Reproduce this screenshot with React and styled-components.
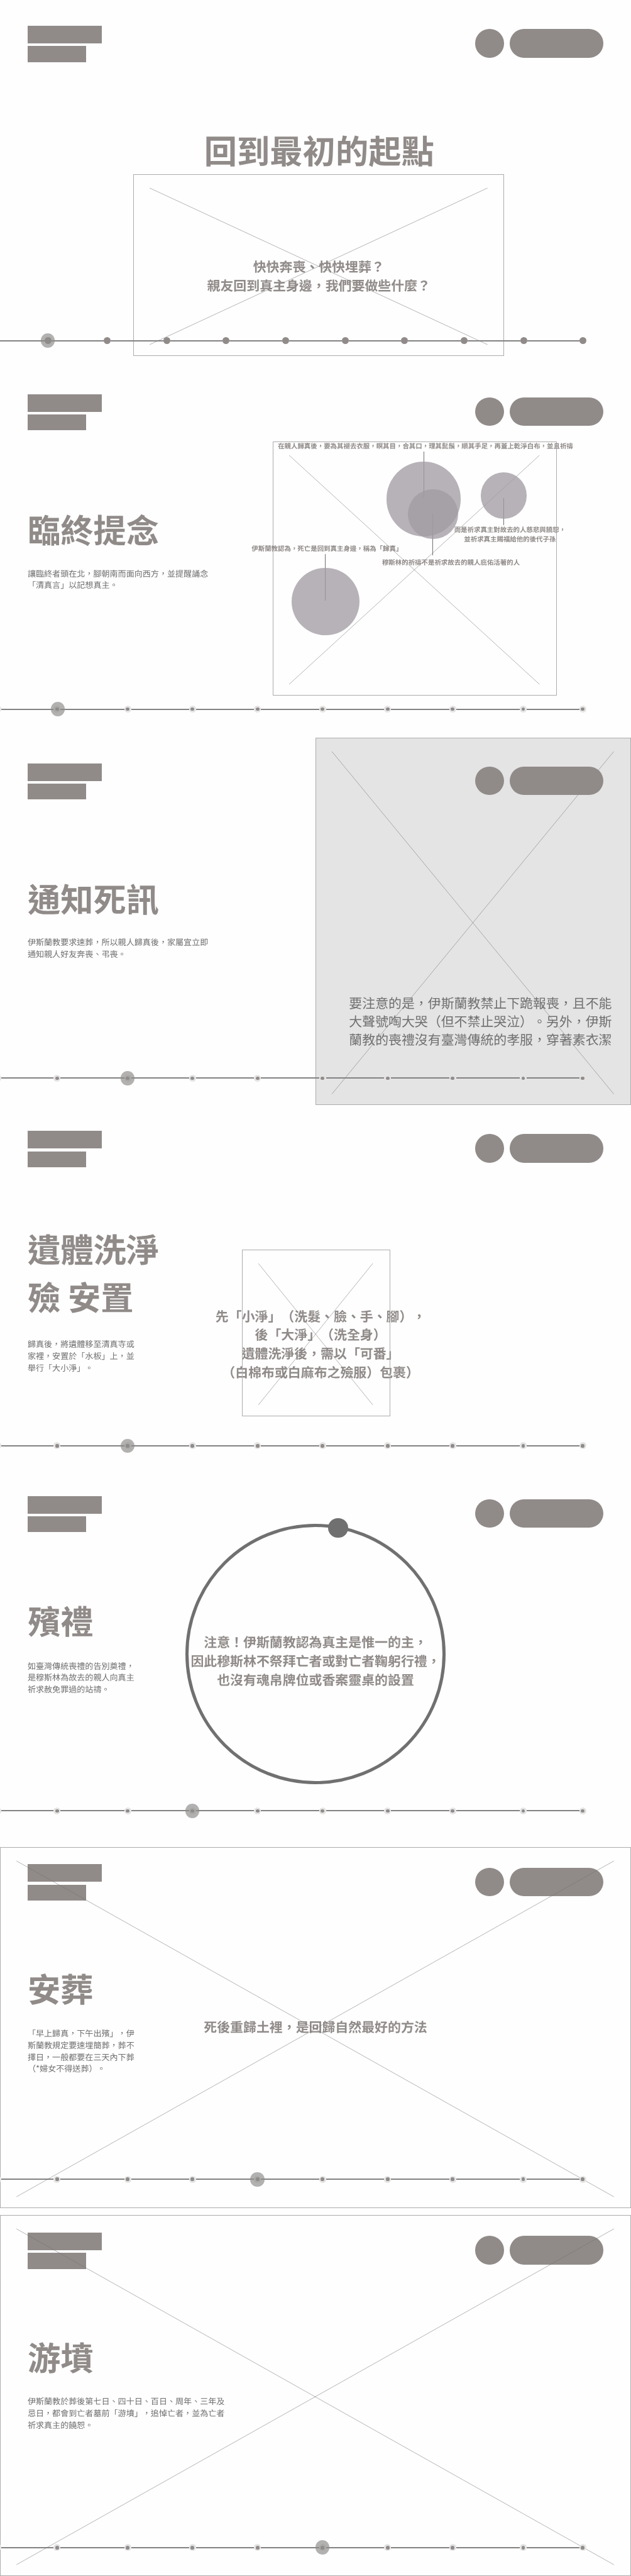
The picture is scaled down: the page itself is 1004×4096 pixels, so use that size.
import React from "react";
import styled, { createGlobalStyle } from "styled-components";

// Design units are those of a 1920 x 7830 artboard.
const SCALE = 1004 / 1920;
const SCALE_Y = 4096 / 7830;
const u = (n) => `${+(n * SCALE).toFixed(3)}px`;
const v = (n) => `${+(n * SCALE_Y).toFixed(3)}px`;

const GREY = "#908b89";
const INK = "#707070";
const HAIR = "#acacac";
const PALE = "#e4e4e4";

const DROP = 3.4;

const GlobalStyle = createGlobalStyle`
  *, *::before, *::after { box-sizing: border-box; }
  body {
    margin: 0;
    background: #fefefe;
    font-family: "Noto Sans CJK TC", "Noto Sans", sans-serif;
    text-rendering: geometricPrecision;
    text-spacing-trim: space-all;
  }
`;

const Page = styled.main`
  width: ${u(1920)};
  height: ${v(7830)};
  overflow: hidden;
  display: flex;
  flex-direction: column;
  will-change: transform;
`;

const Slide = styled.section`
  flex: 0 0 ${(p) => v(p.$height)};
  height: ${(p) => v(p.$height)};
  display: grid;
  grid-template: ${(p) => v(p.$height)} / ${u(1920)};
  align-items: start;
  justify-items: start;
  > * { grid-area: 1 / 1; }
`;

const Header = styled.header`
  width: 100%;
  display: flex;
  justify-content: space-between;
  padding: ${v(78)} ${u(84.5)} 0;
`;

const Brand = styled.div`
  display: flex;
  flex-direction: column;
  gap: ${u(9)};
`;

const BrandBar = styled.span`
  width: ${(p) => u(p.$w)};
  height: ${(p) => u(p.$h)};
  background: ${GREY};
`;

const Actions = styled.div`
  display: flex;
  gap: ${u(18.5)};
  padding-top: ${u(10)};
`;

const Pill = styled.span`
  width: ${(p) => u(p.$w)};
  height: ${u(87)};
  border-radius: ${u(43.5)};
  background: ${GREY};
`;

const Copy = styled.div`
  display: flex;
  flex-direction: column;
  gap: ${(p) => v(p.$gap)};
  padding: ${(p) => v(p.$top + DROP)} 0 0 ${u(84)};
`;

const Title = styled.h2`
  margin: 0;
  color: ${GREY};
  font-size: ${u(100)};
  font-weight: 700;
  line-height: ${u(144)};
  white-space: pre;
`;

const Body = styled.p`
  margin: 0;
  color: ${INK};
  font-size: ${u(25)};
  line-height: ${u(36)};
  white-space: pre;
`;

const Hero = styled.div`
  width: ${u(1942)};
  display: flex;
  flex-direction: column;
  align-items: center;
  padding-top: ${v(381 + DROP)};
`;

const Statement = styled.p`
  margin: ${(p) => v(p.$top + DROP)} 0 0;
  width: ${(p) => u(p.$center * 2)};
  color: ${GREY};
  font-size: ${u(40)};
  font-weight: 700;
  line-height: ${u(57.2)};
  text-align: center;
  white-space: pre;
`;

const Note = styled.p`
  margin: ${v(776.7 + DROP)} 0 0 ${u(1062)};
  color: ${INK};
  font-size: ${u(40)};
  line-height: ${u(55.7)};
  white-space: pre;
`;

const FrameBox = styled.div`
  margin: ${(p) => v(p.$y)} 0 0 ${(p) => u(p.$x)};
  width: ${(p) => u(p.$w)};
  height: ${(p) => v(p.$h)};
  border: 1px solid ${HAIR};
  background: ${(p) => p.$fill || "transparent"};
  svg { display: block; margin: -1px; overflow: visible; }
`;

const Track = styled.div`
  display: flex;
  align-items: center;
  height: ${u(44)};
  margin-top: ${v(1013.5)};
`;

const Segment = styled.span`
  flex: 0 0 ${(p) => u(p.$w)};
  height: 2px;
  background: #828282;
`;

const Stop = styled.span`
  position: relative;
  flex: 0 0 ${u(21)};
  height: ${u(21)};
  border-radius: 50%;
  background: ${(p) => (p.$solid ? GREY : PALE)};
  display: grid;
  place-items: center;
  &::before {
    content: "";
    width: ${u(11)};
    height: ${u(11)};
    border-radius: 50%;
    background: ${GREY};
  }
`;

const Halo = styled.span`
  position: absolute;
  top: ${u(-11)};
  left: ${(p) => u(-11 + p.$shift)};
  width: ${u(43)};
  height: ${u(43)};
  border-radius: 50%;
  background: rgba(142, 140, 138, 0.68);
`;

const Ring = styled.div`
  position: relative;
  margin: ${v(163)} 0 0 ${u(564.5)};
  width: ${u(791)};
  height: ${u(791)};
  border: ${u(10)} solid ${INK};
  border-radius: 50%;
`;

const Knob = styled.span`
  position: absolute;
  left: ${u(424.5)};
  top: ${u(-27)};
  width: ${u(60)};
  height: ${u(60)};
  border-radius: 50%;
  background: ${INK};
`;

const Canvas = styled.div`
  position: relative;
  width: 100%;
  height: 100%;
`;

const Lead = styled.span`
  position: absolute;
  left: ${(p) => u(p.$x - 1)};
  top: ${(p) => u(p.$y)};
  width: 1px;
  height: ${(p) => u(p.$h)};
  background: ${INK};
`;

const Bubble = styled.span`
  position: absolute;
  left: ${(p) => u(p.$x - p.$r)};
  top: ${(p) => u(p.$y - p.$r)};
  width: ${(p) => u(p.$r * 2)};
  height: ${(p) => u(p.$r * 2)};
  border-radius: 50%;
  background: rgba(160, 154, 162, 0.76);
`;

const Label = styled.span`
  position: absolute;
  left: ${(p) => u(p.$x)};
  top: ${(p) => u(p.$y - 15.6 + DROP / 2)};
  color: ${GREY};
  font-size: ${u(20)};
  font-weight: 700;
  line-height: ${u(29)};
  text-align: center;
  white-space: pre;
`;

function Frame({ x, y, w, h, fill }) {
  const padX = 50;
  const padTop = 42;
  const padBottom = 34;
  return (
    <FrameBox $x={x} $y={y} $w={w} $h={h} $fill={fill}>
      <svg width={w * SCALE} height={h * SCALE_Y} viewBox={`0 0 ${w} ${h}`} preserveAspectRatio="none" fill="none" stroke={INK}>
        <path d={`M${padX} ${padTop}L${w - padX - 2} ${h - padBottom}M${w - padX - 2} ${padTop}L${padX} ${h - padBottom}`} />
      </svg>
    </FrameBox>
  );
}

function Masthead() {
  return (
    <Header>
      <Brand>
        <BrandBar $w={224.5} $h={53.5} />
        <BrandBar $w={178} $h={48} />
      </Brand>
      <Actions>
        <Pill $w={87} />
        <Pill $w={284} />
      </Actions>
    </Header>
  );
}

const HERO_STOPS = [145.5, 326.5, 507.5, 688.5, 869.5, 1050.5, 1231.5, 1412.5, 1593.5, 1774.5];
const STOPS = [-7, 173.5, 388.5, 585.5, 783.5, 981.5, 1179.5, 1377.5, 1592.5, 1773.5];

function Timeline({ stops = STOPS, active, solid }) {
  let x = 0;
  return (
    <Track>
      {stops.map((stop, i) => {
        const width = stop - 10.5 - x;
        x = stop + 10.5;
        return (
          <React.Fragment key={stop}>
            {width > 0 && <Segment $w={width} />}
            <Stop $solid={solid} style={width < 0 ? { marginLeft: width * SCALE } : undefined}>
              {i === active && <Halo $shift={active === 1 ? 2 : 0} />}
            </Stop>
          </React.Fragment>
        );
      })}
    </Track>
  );
}

export default function App() {
  return (
    <Page>
      <GlobalStyle />

      <Slide $height={1120}>
        <Masthead />
        <Hero>
          <Title as="h1">回到最初的起點</Title>
        </Hero>
        <Statement $top={781} $center={970}>{"快快奔喪、快快埋葬？\n親友回到真主身邊，我們要做些什麼？"}</Statement>
        <Frame x={404.5} y={529.5} w={1130} h={552} />
        <Timeline stops={HERO_STOPS} active={0} solid />
      </Slide>

      <Slide $height={1122}>
        <Masthead />
        <Copy $top={413} $gap={45}>
          <Title>臨終提念</Title>
          <Body>{"讓臨終者頭在北，腳朝南而面向西方，並提醒誦念\n「清真言」以記想真主。"}</Body>
        </Copy>
        <Frame x={830} y={222} w={863.5} h={772} />
        <Canvas>
          <Lead $x={1289.5} $y={253} $h={141} />
          <Lead $x={1317.5} $y={441} $h={128} />
          <Lead $x={1533.5} $y={394} $h={83} />
          <Lead $x={990.5} $y={563.5} $h={143} />
          <Bubble $x={1289.5} $y={397} $r={113} />
          <Bubble $x={1317.5} $y={443} $r={76} />
          <Bubble $x={1533.5} $y={386.5} $r={70} />
          <Bubble $x={990} $y={709} $r={103} />
          <Label $x={845.5} $y={236.7}>在親人歸真後，要為其褪去衣服，瞑其目，合其口，理其髭鬚，順其手足，再蓋上乾淨白布，並且祈禱</Label>
          <Label $x={1382} $y={490}>{"而是祈求真主對故去的人慈悲與饒恕，\n並祈求真主賜福給他的後代子孫"}</Label>
          <Label $x={765.5} $y={547.5}>伊斯蘭教認為，死亡是回到真主身邊，稱為「歸真」</Label>
          <Label $x={1162.5} $y={589}>穆斯林的祈禱不是祈求故去的親人庇佑活著的人</Label>
        </Canvas>
        <Timeline active={1} />
      </Slide>

      <Slide $height={1117}>
        <Frame x={960.5} y={0.5} w={959.5} h={1117} fill={PALE} />
        <Masthead />
        <Copy $top={413} $gap={45}>
          <Title>通知死訊</Title>
          <Body>{"伊斯蘭教要求速葬，所以親人歸真後，家屬宜立即\n通知親人好友奔喪、弔喪。"}</Body>
        </Copy>
        <Note>{"要注意的是，伊斯蘭教禁止下跪報喪，且不能\n大聲號啕大哭（但不禁止哭泣）。另外，伊斯\n蘭教的喪禮沒有臺灣傳統的孝服，穿著素衣潔"}</Note>
        <Timeline active={2} />
      </Slide>

      <Slide $height={1110}>
        <Masthead />
        <Copy $top={362} $gap={56.5}>
          <Title>{"遺體洗淨\n殮 安置"}</Title>
          <Body>{"歸真後，將遺體移至清真寺或\n家裡，安置於「水板」上，並\n舉行「大小淨」。"}</Body>
        </Copy>
        <Statement $top={611} $center={975.5}>{"先「小淨」（洗髮、臉、手、腳），\n後「大淨」（洗全身）\n遺體洗淨後，需以「可番」\n（白棉布或白麻布之殮服）包裹）"}</Statement>
        <Frame x={737} y={440} w={450} h={506} />
        <Timeline active={2} />
      </Slide>

      <Slide $height={1120}>
        <Masthead />
        <Copy $top={381} $gap={48.5}>
          <Title>殯禮</Title>
          <Body>{"如臺灣傳統喪禮的告別奠禮，\n是穆斯林為故去的親人向真主\n祈求赦免罪過的站禱。"}</Body>
        </Copy>
        <Ring>
          <Knob />
        </Ring>
        <Statement $top={492} $center={960}>{"注意！伊斯蘭教認為真主是惟一的主，\n因此穆斯林不祭拜亡者或對亡者鞠躬行禮，\n也沒有魂帛牌位或香案靈桌的設置"}</Statement>
        <Timeline active={3} />
      </Slide>

      <Slide $height={1119}>
        <Masthead />
        <Copy $top={380} $gap={46.6}>
          <Title>安葬</Title>
          <Body>{"「早上歸真，下午出殯」，伊\n斯蘭教規定要速埋簡葬，葬不\n擇日，一般都要在三天內下葬\n（*婦女不得送葬）。"}</Body>
        </Copy>
        <Statement $top={542.5} $center={960}>死後重歸土裡，是回歸自然最好的方法</Statement>
        <Timeline active={4} />
        <Frame x={0} y={25} w={1920} h={1097} />
      </Slide>

      <Slide $height={1122}>
        <Masthead />
        <Copy $top={380} $gap={46.6}>
          <Title>游墳</Title>
          <Body>{"伊斯蘭教於葬後第七日、四十日、百日、周年、三年及\n忌日，都會到亡者墓前「游墳」，追悼亡者，並為亡者\n祈求真主的饒恕。"}</Body>
        </Copy>
        <Timeline active={5} />
        <Frame x={0} y={25} w={1920} h={1097} />
      </Slide>
    </Page>
  );
}
